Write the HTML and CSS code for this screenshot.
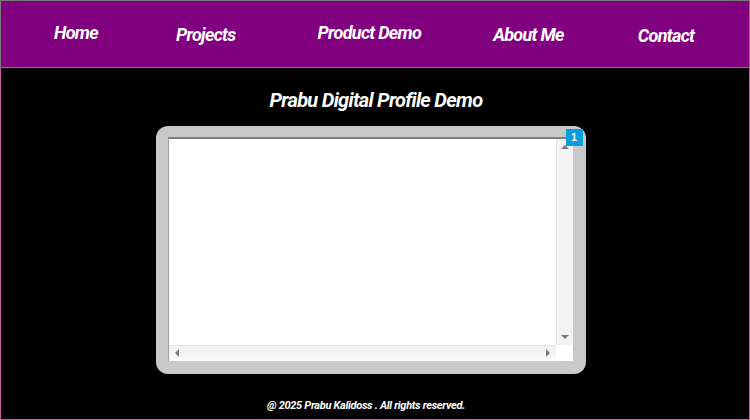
FILE: index.html
```html
<!DOCTYPE html>
<html>
<head>
<meta charset="utf-8">
<link rel="stylesheet" href="styles.css">
</head>
<body>
<header class="topbar">
  <nav class="nav">
    <a class="nav-item home" href="#">Home</a>
    <a class="nav-item projects" href="#">Projects</a>
    <a class="nav-item product" href="#">Product Demo</a>
    <a class="nav-item about" href="#">About Me</a>
    <a class="nav-item contact" href="#">Contact</a>
  </nav>
</header>
<main class="main">
  <h1 class="title">Prabu Digital Profile Demo</h1>
  <div class="frame">
    <div class="viewport">
      <div class="content"></div>
      <div class="vscroll">
        <span class="arrow up"></span>
        <span class="arrow down"></span>
      </div>
      <div class="hscroll">
        <span class="arrow left"></span>
        <span class="arrow right"></span>
      </div>
      <div class="corner"></div>
    </div>
    <span class="badge">1</span>
  </div>
  <footer class="footer">@ 2025 Prabu Kalidoss . All rights reserved.</footer>
</main>
</body>
</html>
```
FILE: styles.css
```css
* { box-sizing: border-box; }
html, body { margin: 0; padding: 0; }
body {
  width: 750px;
  height: 420px;
  background: #000;
  font-family: Roboto, "Liberation Sans", sans-serif;
  overflow: hidden;
}
.topbar {
  height: 68px;
  background: #800080;
  border: 1px solid #7a7a7a;
}
.nav {
  display: flex;
  align-items: center;
  height: 100%;
  padding-left: 53px;
}
.nav-item {
  flex-shrink: 0;
  white-space: nowrap;
  color: #fff;
  text-decoration: none;
  font-weight: bold;
  font-style: italic;
  font-size: 18px;
  letter-spacing: -0.7px;
}
.home { margin-top: -4px; margin-right: 78px; }
.projects { margin-top: 1px; margin-right: 82px; }
.product { margin-top: -3px; margin-right: 72px; }
.about { margin-top: 1px; margin-right: 74px; }
.contact { margin-top: 2px; }
.main {
  height: 352px;
  border: 1px solid #c8609a;
  border-top: none;
  display: flex;
  flex-direction: column;
  align-items: center;
  padding-top: 20px;
}
.title {
  margin: 0;
  color: #fff;
  font-size: 20px;
  font-weight: bold;
  font-style: italic;
  letter-spacing: -0.7px;
  line-height: 24px;
  margin-left: 2px;
}
.frame {
  position: relative;
  margin-top: 14px;
  width: 430px;
  height: 248px;
  background: #c9c9c9;
  border-radius: 12px;
  padding: 11px 13px 13px 12px;
  margin-left: -9px;
}
.viewport {
  width: 405px;
  height: 224px;
  background: #fff;
  border-top: 2px solid #7d7d7d;
  border-left: 1px solid #a0a0a0;
  display: grid;
  grid-template-columns: 1fr 17px;
  grid-template-rows: 1fr 16px;
}
.content { background: #fff; }
.vscroll {
  background: #f3f3f3;
  border-left: 1px solid #e4e4e4;
  position: relative;
}
.hscroll {
  background: linear-gradient(#f0f0f0, #fafafa);
  border-top: 1px solid #e4e4e4;
  position: relative;
}
.corner { background: #fff; }
.arrow {
  position: absolute;
  width: 0;
  height: 0;
}
.arrow.up {
  top: 6px; left: 4px;
  border-left: 4px solid transparent;
  border-right: 4px solid transparent;
  border-bottom: 4px solid #7a7a7a;
}
.arrow.down {
  bottom: 6px; left: 4px;
  border-left: 4px solid transparent;
  border-right: 4px solid transparent;
  border-top: 4px solid #7a7a7a;
}
.arrow.left {
  left: 6px; top: 3px;
  border-top: 4px solid transparent;
  border-bottom: 4px solid transparent;
  border-right: 4px solid #7a7a7a;
}
.arrow.right {
  right: 6px; top: 3px;
  border-top: 4px solid transparent;
  border-bottom: 4px solid transparent;
  border-left: 4px solid #7a7a7a;
}
.badge {
  position: absolute;
  top: 3px;
  right: 3px;
  width: 17px;
  height: 17px;
  background: #0b9cdc;
  color: #fff;
  font-family: "Liberation Sans", Arial, sans-serif;
  font-weight: bold;
  font-size: 10px;
  line-height: 17px;
  text-align: center;
}
.footer {
  margin-top: 25px;
  color: #fff;
  font-size: 11px;
  font-weight: bold;
  font-style: italic;
  letter-spacing: -0.3px;
  margin-left: -18px;
}
```
